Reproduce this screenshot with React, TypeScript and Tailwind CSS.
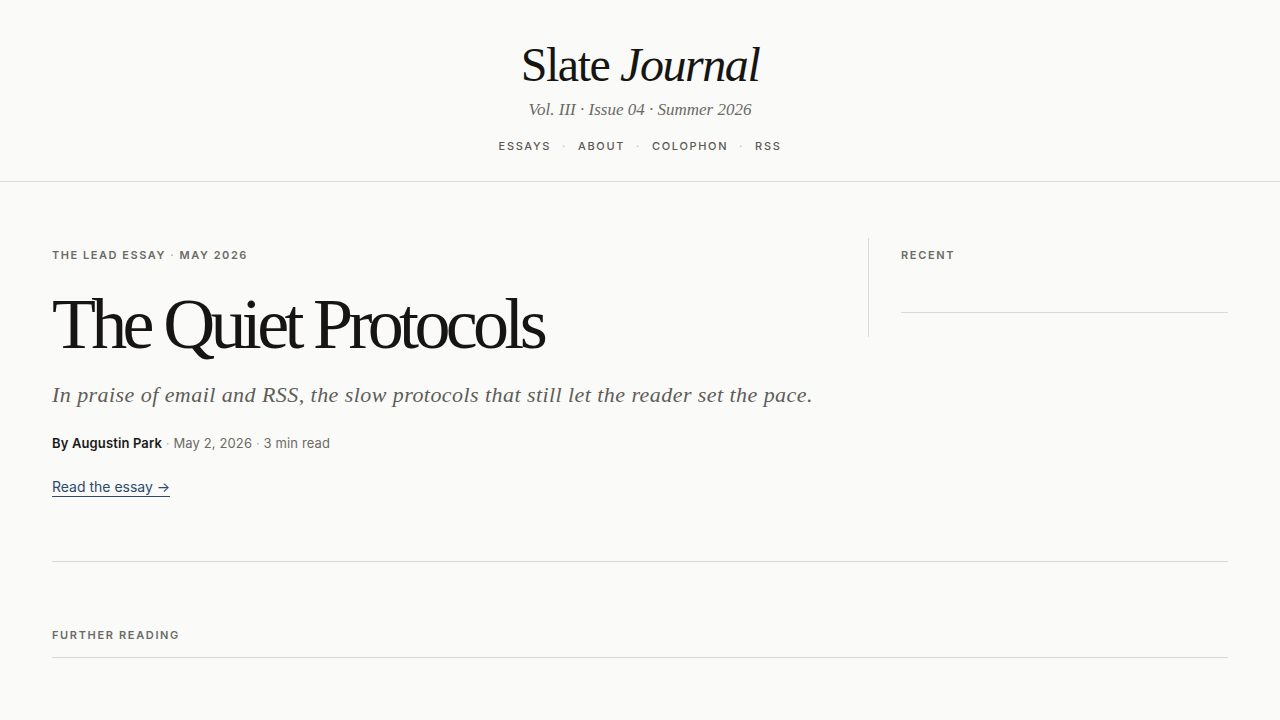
import React from "react";

const serif = { fontFamily: '"Liberation Serif", "Times New Roman", serif' };

export default function App() {
  return (
    <div className="min-h-screen bg-[#fafaf8] text-[#1a1a1a]" style={{ fontFamily: 'Inter, "Liberation Sans", sans-serif' }}>
      <header className="border-b border-[#dcdad4] pt-[41px] pb-[27px] text-center">
        <h1 className="text-[48px] leading-none tracking-[-0.03em] text-[#161512]" style={serif}>
          Slate <em className="italic">Journal</em>
        </h1>
        <p className="mt-[8px] text-[17px] leading-[25px] italic text-[#6b6a66]" style={serif}>
          Vol. III · Issue 04 · Summer 2026
        </p>
        <nav className="mt-[16px] flex items-center justify-center gap-[11px] text-[11px] leading-[16px] font-medium tracking-[0.15em] text-[#5a5955]">
          <a>ESSAYS</a>
          <span className="text-[#cbbfb8]">·</span>
          <a>ABOUT</a>
          <span className="text-[#cbbfb8]">·</span>
          <a>COLOPHON</a>
          <span className="text-[#cbbfb8]">·</span>
          <a>RSS</a>
        </nav>
      </header>

      <main className="px-[52px] pt-[56px]">
        <section className="grid grid-cols-[1fr_360px] items-start gap-8 border-b border-[#dcdad4] pb-[63px]">
          <article className="pt-[9px]">
            <p className="text-[11px] leading-[16px] font-semibold tracking-[0.14em] text-[#6b6a66]">
              THE LEAD ESSAY <span className="text-[#b5b2aa]">·</span> MAY 2026
            </p>
            <h2 className="mt-[25px] text-[72px] leading-none tracking-[-0.065em] text-[#161512]" style={serif}>
              The Quiet Protocols
            </h2>
            <p className="mt-[20px] text-[22px] leading-[29px] italic tracking-[0.02em] text-[#5e5d59]" style={serif}>
              In praise of email and RSS, the slow protocols that still let the reader set the pace.
            </p>
            <p className="mt-[24px] text-[13px] leading-[20px] tracking-[0.01em] text-[#6b6a66]">
              <span className="font-semibold text-[#1a1a1a]">By Augustin Park</span>
              <span className="text-[#b5b2aa]"> · </span>
              May 2, 2026
              <span className="text-[#b5b2aa]"> · </span>
              3 min read
            </p>
            <div className="mt-[21px]">
              <a className="inline-block border-b border-[#2e4a6a] text-[14px] leading-[19px] text-[#2e4a6a]">
                Read the essay →
              </a>
            </div>
          </article>
          <aside className="border-l border-[#dcdad4] pl-8 pt-[9px] pb-[24px]">
            <p className="text-[11px] leading-[16px] font-semibold tracking-[0.15em] text-[#6b6a66]">RECENT</p>
            <div className="mt-[49px] border-t border-[#dcdad4]" />
          </aside>
        </section>

        <section className="pt-[65px]">
          <p className="text-[11px] leading-[16px] font-semibold tracking-[0.15em] text-[#6b6a66]">FURTHER READING</p>
          <div className="mt-[14px] border-t border-[#dcdad4]" />
        </section>
      </main>
    </div>
  );
}
